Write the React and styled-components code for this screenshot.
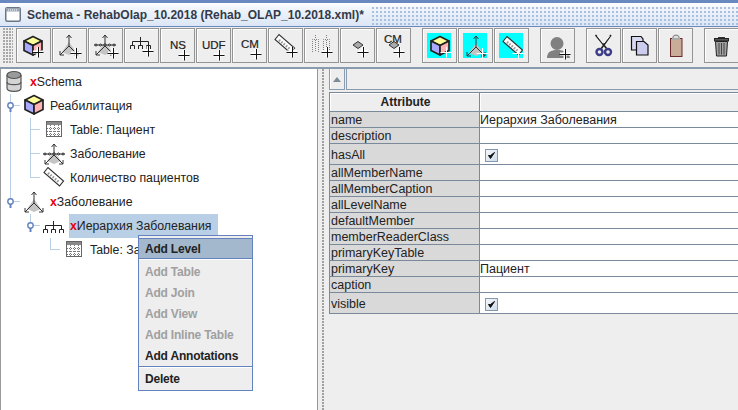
import React from "react";
import styled, { createGlobalStyle } from "styled-components";

const Global = createGlobalStyle`
  html, body { margin: 0; padding: 0; background: #eeeeee; }
  body { font-family: "Liberation Sans", Arial, sans-serif; font-size: 12px; color: #222; }
`;

const Frame = styled.div`
  position: relative;
  width: 738px;
  height: 410px;
  overflow: hidden;
  display: flex;
  flex-direction: column;
  background: #eeeeee;
`;

const TitleBar = styled.div`
  height: 23px;
  border-top: 3px solid #6a88c0;
  border-bottom: 1px solid #6a88c0;
  display: flex;
  align-items: center;
  gap: 6px;
  padding-left: 5px;
  background: linear-gradient(#ffffff, #f2f6fc 20%, #dbe6f5);
`;

const TitleText = styled.span`
  font-size: 12px;
  font-weight: bold;
  color: #333a4a;
  white-space: nowrap;
  padding-top: 1px;
`;

const TitleDots = styled.div`
  flex: 1;
  align-self: stretch;
  margin: 4px 0 1px 2px;
  background-image: radial-gradient(circle at 1px 1px, #a9bfdd 1px, transparent 1px);
  background-size: 4px 4px;
`;

const Toolbar = styled.div`
  height: 39px;
  display: flex;
  align-items: flex-start;
  gap: 11px;
  padding: 1px 0 0 3px;
  background: #eeeeee;
  border-bottom: 2px solid #8a9bb0;
`;

const Grip = styled.div`
  width: 10px;
  height: 35px;
  margin-right: -8px;
  flex: none;
  background-image: radial-gradient(circle at 1px 1px, #a8a8a8 1px, transparent 1px);
  background-size: 3px 3px;
`;

const ToolGroup = styled.div`
  display: flex;
  gap: 1px;
  flex: none;
`;

const ToolButton = styled.button`
  width: 35px;
  height: 35px;
  padding: 0;
  flex: none;
  border: 1px solid #949494;
  background: #eeeeee;
  box-shadow: inset 1px 1px 0 #ffffff;
`;

const ToolSvg = styled.svg`
  display: block;
  margin: -1px;
`;

const Split = styled.div`
  flex: 1;
  display: flex;
  min-height: 0;
`;

const TreePane = styled.div`
  width: 316px;
  flex: none;
  background: #ffffff;
  border-left: 1px solid #9a9a9a;
  border-right: 1px solid #8a9bb0;
  padding-top: 1px;
`;

const Divider = styled.div`
  width: 11px;
  flex: none;
  background-color: #eeeeee;
  background-image: radial-gradient(circle at 1px 1px, #a0a0a0 1px, transparent 1px);
  background-size: 3px 3px;
  background-position: 4px 0;
  background-repeat: repeat-y;
`;

const TreeRow = styled.div`
  height: 24px;
  margin-left: -1px;
  display: flex;
  align-items: center;
`;

const Guide = styled.svg`
  display: block;
  flex: none;
`;

const NodeIcon = styled.svg`
  display: block;
  flex: none;
`;

const NodeLabel = styled.span`
  margin-left: 1px;
  padding: 0 ${(p) => (p.$selected ? "7px" : "0")} 0 1px;
  line-height: 24px;
  height: 24px;
  font-size: 12.3px;
  white-space: nowrap;
  background: ${(p) => (p.$selected ? "#b8cfe5" : "transparent")};
`;

const RedX = styled.b`
  color: #e8000d;
  font-weight: bold;
`;

const PropsPane = styled.div`
  flex: 1;
  display: flex;
  flex-direction: column;
  min-width: 0;
`;

const TabStrip = styled.div`
  height: 21px;
  display: flex;
  margin-bottom: 2px;
`;

const ScrollArrow = styled.div`
  width: 16px;
  height: 21px;
  box-sizing: border-box;
  border: 1px solid #8a9bb0;
  border-top: 0;
  background: #eeeeee;
  box-shadow: inset 1px 0 0 #ffffff;
  display: flex;
  align-items: center;
  justify-content: center;
  &::before {
    content: "";
    border-left: 4px solid transparent;
    border-right: 4px solid transparent;
    border-bottom: 5px solid #7d8a97;
  }
`;

const TabRest = styled.div`
  flex: 1;
  box-sizing: border-box;
  border-bottom: 1px solid #8a9bb0;
  margin-left: 1px;
  border-left: 1px solid #8a9bb0;
`;

const Grid = styled.div`
  border-top: 1px solid #7b8a9a;
  border-left: 1px solid #7b8a9a;
  font-size: 12.5px;
`;

const GridRow = styled.div`
  display: grid;
  grid-template-columns: 150px 1fr;
  height: ${(p) => p.$h}px;
  border-bottom: 1px solid #7b8a9a;
  box-sizing: border-box;
`;

const HeadCell = styled.div`
  background: #eeeeee;
  font-size: 12px;
  font-weight: bold;
  text-align: center;
  line-height: 18px;
  padding-left: 2px;
  border-right: 1px solid #7b8a9a;
  box-shadow: inset 1px 1px 0 #ffffff;
`;

const HeadBlank = styled.div`
  background: #eeeeee;
  box-shadow: inset 1px 1px 0 #ffffff;
`;

const NameCell = styled.div`
  background: #d9d9d9;
  padding: ${(p) => (p.$tall ? "2px" : "0")} 0 0 1px;
  display: flex;
  align-items: center;
  border-right: 1px solid #7b8a9a;
  white-space: nowrap;
`;

const ValueCell = styled.div`
  background: #ffffff;
  padding: ${(p) => (p.$check ? "2px 0 0 5px" : "0")};
  display: flex;
  align-items: center;
  white-space: nowrap;
`;

const Check = styled.span`
  width: 13px;
  height: 13px;
  box-sizing: border-box;
  border: 1px solid #8497ab;
  background: linear-gradient(135deg, #f4f7fb, #cfdcec);
  display: block;
`;

const CheckMark = styled.svg`
  display: block;
`;

const Popup = styled.div`
  position: absolute;
  left: 138px;
  top: 235px;
  width: 115px;
  box-sizing: border-box;
  border: 1px solid #6382bf;
  background: #eeeeee;
  padding: 2px 0 1px;
`;

const PopupItem = styled.div`
  height: 21px;
  box-sizing: border-box;
  line-height: ${(p) => (p.$active ? "21px" : "23px")};
  padding-left: 6px;
  font-size: 12px;
  letter-spacing: -0.2px;
  font-weight: bold;
  color: ${(p) => (p.$disabled ? "#a0a0a0" : "#222")};
  background: ${(p) => (p.$active ? "#a3b8cc" : "transparent")};
  border: solid #6382bf;
  border-width: ${(p) => (p.$active ? "1px 0" : "0")};
`;

const PopupSep = styled.div`
  height: 2px;
  box-sizing: border-box;
  border-top: 1px solid ${(p) => (p.$plain ? "#ffffff" : "#6382bf")};
  border-bottom: 1px solid ${(p) => (p.$plain ? "#eeeeee" : "#ffffff")};
`;

/* drawings, 24x24 local coords */
const Cube = () => (
  <g stroke="#222" strokeWidth="1.700" strokeLinejoin="round">
    <polygon points="12,1.500 21,6 12,10.500 3,6" fill="#ffff99" />
    <polygon points="3,6 12,10.500 12,20 3,15.500" fill="#a9a9ff" />
    <polygon points="21,6 12,10.500 12,20 21,15.500" fill="#ffb3b3" />
  </g>
);

const Dim = ({ dots }) => (
  <g fill="none">
    <polygon points="12,9 5,19 12,22 19,19" fill="#c4c4c4" stroke="none" />
    <path d="M12 2V13M12 13L3 22M12 13L21 22" stroke="#333" />
    <path d="M9.500 5L12 2L14.500 5M3 18V22H7M21 18V22H17" stroke="#333" />
    {dots && (
      <g fill="#fff" stroke="#222">
        <path d="M1 12H23" />
        <circle cx="3" cy="12" r="1" />
        <circle cx="7.500" cy="12" r="1" />
        <circle cx="12" cy="12" r="1" />
        <circle cx="16.500" cy="12" r="1" />
        <circle cx="21" cy="12" r="1" />
      </g>
    )}
  </g>
);

const Hier = () => (
  <path
    d="M11.500 3V7.500M3.500 12V7.500H19.500V12M11.500 7.500V12M1.500 15V11.500H5.500V15M9.500 15V11.500H13.500V15M17.500 15V11.500H21.500V15"
    fill="none"
    stroke="#222"
  />
);

const GhostLevels = () => (
  <path
    d="M11.500 7V11M22.500 7V11M8.500 24V11.500H14.500V24M19.500 24V11.500H25.500V24M11.500 12V24M22.500 12V24"
    fill="none"
    stroke="#808080"
    strokeDasharray="1 1"
  />
);

const Ruler = () => (
  <g>
    <polygon points="2,6.500 6,1.500 21.500,15 17.500,20" fill="#fff" stroke="#333" strokeWidth="1.200" />
    <path d="M6 7L17.500 16.500" stroke="#999" strokeDasharray="1.500 1.500" strokeWidth="2.500" fill="none" />
  </g>
);

const Diamond = () => <polygon points="13,17 18,13.500 23,17 18,20.500" fill="#aaaaaa" stroke="#333" />;

const Plus = ({ x, y, r = 5, light }) => (
  <g fill="none">
    {!light && <path d={`M${x - r} ${y}H${x + r}M${x} ${y - r}V${y + r}`} stroke="#fff" strokeWidth="3" />}
    <path d={`M${x - r - 0.500} ${y + 0.500}H${x + r + 0.500}M${x + 0.500} ${y - r}V${y + r + 0.500}`} stroke={light ? "#fff" : "#111"} />
  </g>
);

const Lbl = ({ x, y, children }) => (
  <text x={x} y={y} fontFamily="Liberation Sans, Arial, sans-serif" fontSize="11.500" stroke="#222" strokeWidth="0.200" fill="#222">
    {children}
  </text>
);

const TableGlyph = () => (
  <g>
    <rect x="4.500" y="3.500" width="15" height="15" fill="#fff" stroke="#666" />
    <rect x="5" y="4" width="14" height="3" fill="#8a8a8a" />
    <path d="M5 10.500H19M5 13.500H19M5 16.500H19" stroke="#777" strokeDasharray="1 1" />
    <path d="M8.500 7V18M12.500 7V18M16.500 7V18" stroke="#777" strokeDasharray="1 1" />
  </g>
);

const SchemaGlyph = () => (
  <g stroke="#555" strokeWidth="1.200">
    <path d="M5 5V18C5 22.500 19 22.500 19 18V5" fill="#d4d4d4" />
    <ellipse cx="12" cy="5" rx="7" ry="3.500" fill="#9a9a9a" />
    <path d="M5 12C5 15.500 19 15.500 19 12" fill="none" />
  </g>
);

const Scissors = () => (
  <g fill="none">
    <path d="M9.500 7L21 21M25 7L15 21" stroke="#222" strokeWidth="1.600" />
    <path d="M11.500 8L17 15M23.500 8L18 15" stroke="#fff" />
    <circle cx="13.500" cy="24" r="3" stroke="#3c3c88" strokeWidth="2.400" />
    <circle cx="22" cy="24" r="3" stroke="#3c3c88" strokeWidth="2.400" />
  </g>
);

const CopyGlyph = () => (
  <g stroke="#111" strokeWidth="1.200">
    <polygon points="9.500,8.500 19,8.500 21,11 21,22 9.500,22" fill="#d8d8f0" />
    <polygon points="14.500,13.500 22,13.500 26,17 26,27 14.500,27" fill="#ccccee" />
  </g>
);

const PasteGlyph = () => (
  <g>
    <rect x="12.500" y="10.500" width="11.500" height="18" fill="#c9ad98" stroke="#6b2a2a" />
    <path d="M15 11V9C15 6.500 21 6.500 21 9V11Z" fill="#ddd" stroke="#777" />
    <rect x="14" y="10" width="8" height="2" fill="#aaa" />
  </g>
);

const TrashGlyph = () => (
  <g>
    <path d="M14 9.500H21" stroke="#333" />
    <rect x="10.500" y="10.500" width="14" height="2.500" fill="#555" stroke="#222" />
    <polygon points="11.500,13.500 23.500,13.500 22.500,28 12.500,28" fill="#a0a0a0" stroke="#222" />
    <path d="M15 15V26.500M17.500 15V26.500M20 15V26.500" stroke="#444" />
  </g>
);

const Person = () => (
  <g fill="#808080">
    <circle cx="17" cy="15.500" r="6.500" />
    <path d="M7 30C7 24 11 22 17 22C24 22 29 24 30 30Z" />
  </g>
);

const Tool = ({ cyan, children }) => (
  <ToolButton>
    <ToolSvg width="35" height="35" viewBox="0 0 35 35">
      {cyan && <rect x="5" y="5" width="24" height="25" fill="#00ffff" />}
      {children}
    </ToolSvg>
  </ToolButton>
);

const At = ({ x = 5, y = 5, children }) => <g transform={`translate(${x} ${y})`}>{children}</g>;

const Connector = ({ v, stub, knob }) => {
  const y2 = v === "full" ? 24 : 12;
  return (
    <Guide width="20" height="24" viewBox="0 0 20 24">
      {v && <path d={`M10.500 0V${y2}`} stroke="#b8cfe5" fill="none" />}
      {(stub || knob) && <path d="M10.500 11.500H20" stroke="#b8cfe5" fill="none" />}
      {knob && (
        <g fill="none" stroke="#6382bf">
          <path d="M10.500 14V18" strokeWidth="2" />
          <circle cx="10.500" cy="11.500" r="2.700" fill="#fff" strokeWidth="1.400" />
        </g>
      )}
    </Guide>
  );
};

const Glyph = ({ children }) => (
  <NodeIcon width="28" height="24" viewBox="0 0 28 24">
    <g transform="translate(2 0)">{children}</g>
  </NodeIcon>
);

const Node = ({ guides, glyph, selected, marked, children }) => (
  <TreeRow>
    {guides.map((g, i) => (
      <Connector key={i} {...g} />
    ))}
    <Glyph>{glyph}</Glyph>
    <NodeLabel $selected={selected}>
      {marked && <RedX>x</RedX>}
      {children}
    </NodeLabel>
  </TreeRow>
);

const attrs = [
  ["name", "Иерархия Заболевания", 16],
  ["description", "", 16],
  ["hasAll", "check", 21],
  ["allMemberName", "", 16],
  ["allMemberCaption", "", 16],
  ["allLevelName", "", 16],
  ["defaultMember", "", 16],
  ["memberReaderClass", "", 16],
  ["primaryKeyTable", "", 16],
  ["primaryKey", "Пациент", 16],
  ["caption", "", 16],
  ["visible", "check", 21],
];

const CheckBox = () => (
  <Check>
    <CheckMark width="11" height="11" viewBox="0 0 11 11">
      <path d="M2.500 5.500L4.500 8.500L8.500 2.500L4.500 5.500Z" fill="#111" stroke="#111" />
    </CheckMark>
  </Check>
);

export default function App() {
  return (
    <Frame>
      <Global />
      <TitleBar>
        <svg width="16" height="15" viewBox="0 0 16 15">
          <rect x="0.750" y="0.750" width="14.500" height="13.500" rx="1.500" fill="#fff" stroke="#6a7686" strokeWidth="1.500" />
          <rect x="1" y="1" width="14" height="3.500" fill="#9aa6b6" />
          <path d="M3 3H13" stroke="#fff" strokeDasharray="1 1" />
        </svg>
        <TitleText>Schema - RehabOlap_10.2018 (Rehab_OLAP_10.2018.xml)*</TitleText>
        <TitleDots />
      </TitleBar>
      <Toolbar>
        <Grip />
        <ToolGroup>
          <Tool><At y={7}><Cube /></At><Plus x={22} y={24} /></Tool>
          <Tool><At><Dim /></At><Plus x={24} y={25} /></Tool>
          <Tool><At><Dim dots /></At><Plus x={25} y={25} /></Tool>
          <Tool><At y={6}><Hier /></At><Plus x={24} y={23} /></Tool>
          <Tool><Lbl x={10} y={21}>NS</Lbl><Plus x={24} y={27} /></Tool>
          <Tool><Lbl x={6} y={21}>UDF</Lbl><Plus x={23} y={27} /></Tool>
          <Tool><Lbl x={9} y={20}>CM</Lbl><Plus x={24} y={26} /></Tool>
          <Tool><At><Ruler /></At><Plus x={24} y={24} /></Tool>
          <Tool><GhostLevels /><Plus x={23} y={24} /></Tool>
          <Tool><Diamond /><Plus x={23} y={24} /></Tool>
          <Tool><Lbl x={8} y={15}>CM</Lbl><Diamond /><Plus x={23} y={24} /></Tool>
        </ToolGroup>
        <ToolGroup>
          <Tool cyan><At x={6} y={7}><Cube /></At><Plus x={24} y={24} light /></Tool>
          <Tool cyan><At x={6} y={6}><Dim /></At><Plus x={24} y={25} light /></Tool>
          <Tool cyan><At x={7} y={7}><Ruler /></At><Plus x={24} y={25} light /></Tool>
        </ToolGroup>
        <ToolGroup>
          <Tool><Person /><Plus x={25} y={26} /></Tool>
        </ToolGroup>
        <ToolGroup>
          <Tool><Scissors /></Tool>
          <Tool><CopyGlyph /></Tool>
          <Tool><PasteGlyph /></Tool>
        </ToolGroup>
        <ToolGroup>
          <Tool><TrashGlyph /></Tool>
        </ToolGroup>
      </Toolbar>
      <Split>
        <TreePane>
          <Node guides={[]} glyph={<SchemaGlyph />} marked>Schema</Node>
          <Node guides={[{ v: "full", knob: true }]} glyph={<Cube />}>Реабилитация</Node>
          <Node guides={[{ v: "full" }, { v: "full", stub: true }]} glyph={<TableGlyph />}>Table: Пациент</Node>
          <Node guides={[{ v: "full" }, { v: "full", stub: true }]} glyph={<Dim dots />}>Заболевание</Node>
          <Node guides={[{ v: "full" }, { v: "top", stub: true }]} glyph={<Ruler />}>Количество пациентов</Node>
          <Node guides={[{ v: "top", knob: true }]} glyph={<Dim />} marked>Заболевание</Node>
          <Node guides={[{}, { v: "top", knob: true }]} glyph={<At x={0} y={4}><Hier /></At>} marked selected>Иерархия Заболевания</Node>
          <Node guides={[{}, {}, { v: "top", stub: true }]} glyph={<TableGlyph />}>Table: Заболевание</Node>
        </TreePane>
        <Divider />
        <PropsPane>
          <TabStrip>
            <ScrollArrow />
            <TabRest />
          </TabStrip>
          <Grid>
            <GridRow $h={19}>
              <HeadCell>Attribute</HeadCell>
              <HeadBlank />
            </GridRow>
            {attrs.map(([name, value, h]) => (
              <GridRow key={name} $h={h}>
                <NameCell $tall={h > 16}>{name}</NameCell>
                <ValueCell $check={value === "check"}>
                  {value === "check" ? <CheckBox /> : value}
                </ValueCell>
              </GridRow>
            ))}
          </Grid>
        </PropsPane>
      </Split>
      <Popup>
        <PopupItem $active>Add Level</PopupItem>
        <PopupSep $plain />
        <PopupItem $disabled>Add Table</PopupItem>
        <PopupItem $disabled>Add Join</PopupItem>
        <PopupItem $disabled>Add View</PopupItem>
        <PopupItem $disabled>Add Inline Table</PopupItem>
        <PopupItem>Add Annotations</PopupItem>
        <PopupSep />
        <PopupItem>Delete</PopupItem>
      </Popup>
    </Frame>
  );
}
